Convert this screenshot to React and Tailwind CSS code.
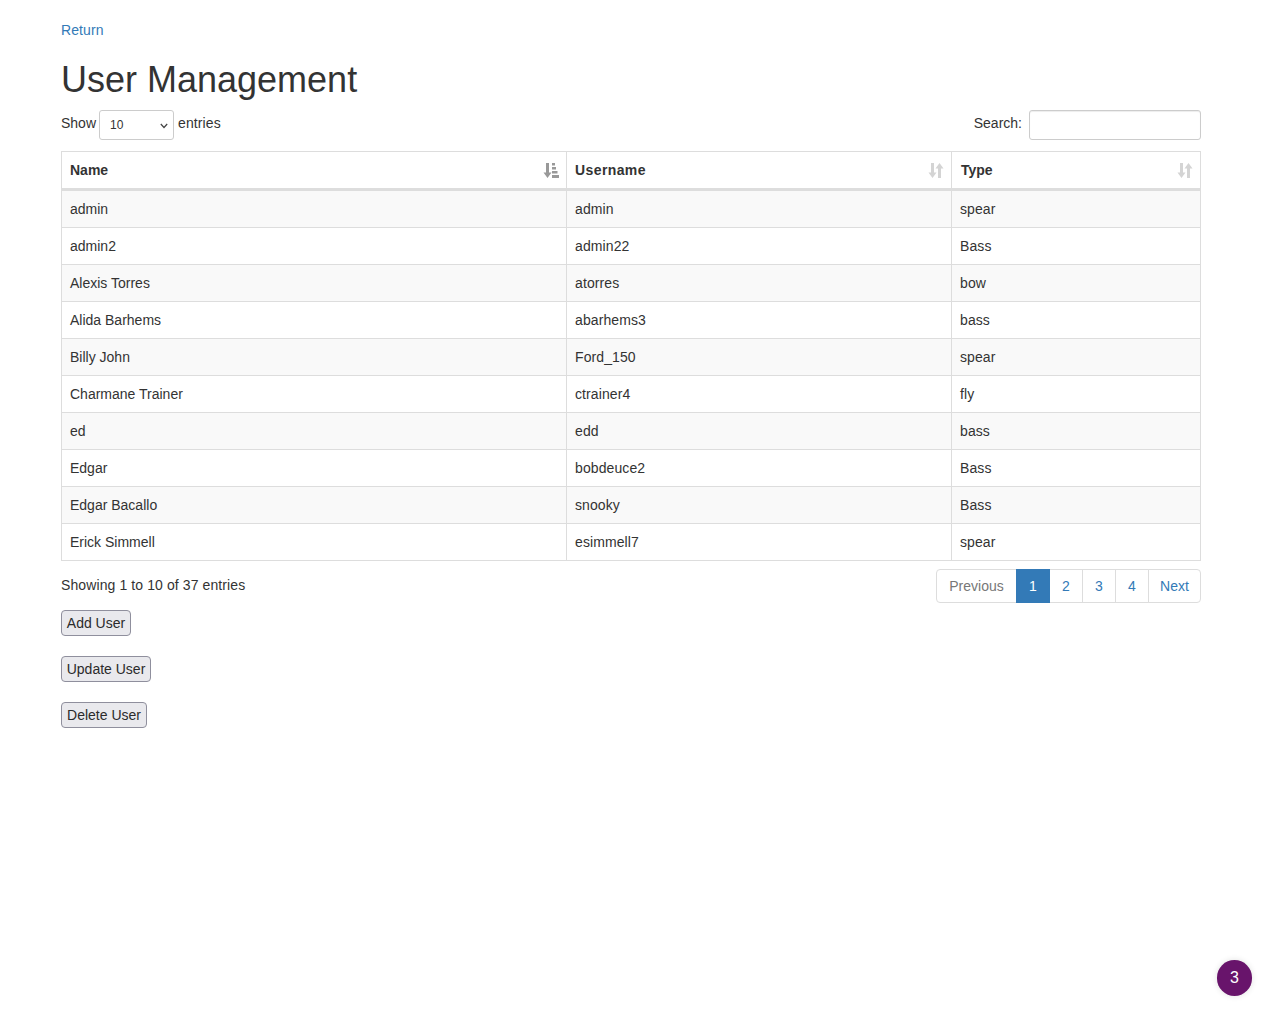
const rows = [
  ["admin", "admin", "spear"],
  ["admin2", "admin22", "Bass"],
  ["Alexis Torres", "atorres", "bow"],
  ["Alida Barhems", "abarhems3", "bass"],
  ["Billy John", "Ford_150", "spear"],
  ["Charmane Trainer", "ctrainer4", "fly"],
  ["ed", "edd", "bass"],
  ["Edgar", "bobdeuce2", "Bass"],
  ["Edgar Bacallo", "snooky", "Bass"],
  ["Erick Simmell", "esimmell7", "spear"],
];

function SortBoth() {
  return (
    <svg width="16" height="15" viewBox="0 0 16 15" className="block" fill="#d4d4d4">
      <path d="M3 0h3v9.5h2.5L4.5 15 .5 9.5H3z" />
      <path d="M10 15h3V5.5h2.5L11.500 0l-4 5.500H10z" />
    </svg>
  );
}

function SortAsc() {
  return (
    <svg width="16" height="15" viewBox="0 0 16 15" className="block" fill="#999">
      <path d="M3 0h3v9.5h2.500L4.500 15 .5 9.500H3z" />
      <path d="M9 0h3v2.500H9zM9 4h4v2.500H9zM9 8h5.500v2.500H9zM9 12h7v3H9z" />
    </svg>
  );
}

function Th({ label, width, icon, extra = "pl-2" }) {
  return (
    <th
      className={`relative border border-b-[3px] border-[#dddddd] p-0 pr-2 h-[38px] text-left font-bold align-middle ${extra}`}
      style={{ width }}
    >
      {label}
      <span className="absolute right-[7px] top-[11px]">{icon}</span>
    </th>
  );
}

function PageLink({ children, className = "" }) {
  return (
    <a href="#" className={`block border border-[#dddddd] -ml-px py-1.5 text-center leading-[20px] text-[#337ab7] bg-white ${className}`}>
      {children}
    </a>
  );
}

const btn = "block h-[26px] px-0 text-center whitespace-nowrap rounded-[4px] border border-[#8f8f9d] bg-[#e9e9ed] text-[#2b2b2b] text-[14px] leading-[20px] font-['Liberation_Sans',Arial,sans-serif]";

export default function App() {
  return (
    <div className="relative min-h-[1028px] bg-white text-[14px] leading-[20px] text-[#333333] font-['Liberation_Sans',Arial,sans-serif]">
      <div className="w-[1140px] ml-[61px] pt-5">
        <a href="#" className="block text-[#337ab7] tracking-[0.1px]">Return</a>
        <h1 className="text-[36px] leading-[40px] font-normal mt-5 mb-[10px]">User Management</h1>
        <div className="flex justify-between items-start h-[41px]">
          <div className="flex items-center h-[30px]">
            <span className="-translate-y-[2px]">Show</span>
            <div className="relative ml-[3px] mr-1">
              <div className="w-[75px] h-[30px] border border-[#cccccc] rounded-[3px] bg-white pl-[10px] text-[12px] leading-[28px]">10</div>
              <svg width="8" height="6" viewBox="0 0 8 6" className="absolute right-[6px] top-[13px]" fill="none" stroke="#444" strokeWidth="1.200">
                <path d="M.8 1 4 4.500 7.200 1" />
              </svg>
            </div>
            <span className="-translate-y-[2px] tracking-[0.1px]">entries</span>
          </div>
          <div className="flex items-center h-[30px]">
            <span className="-translate-y-[2px]">Search:</span>
            <input className="ml-[7px] w-[172px] h-[30px] border border-[#cccccc] rounded-[3px] bg-white outline-none shadow-[inset_0_1px_1px_rgba(0,0,0,0.075)]" />
          </div>
        </div>
        <table className="w-[1139px] table-fixed border-collapse">
          <thead>
            <tr>
              <Th label="Name" width="505px" icon={<SortAsc />} />
              <Th label="Username" width="385px" icon={<SortBoth />} extra="pl-2 tracking-[0.4px]" />
              <Th label="Type" width="249px" icon={<SortBoth />} extra="pl-[9px]" />
            </tr>
          </thead>
          <tbody>
            {rows.map((r, i) => (
              <tr key={r[0]} className={i % 2 === 0 ? "bg-[#f9f9f9]" : "bg-white"}>
                {r.map((c, j) => (
                  <td
                    key={j}
                    className={`border border-[#dddddd] px-2 align-middle ${i === 0 ? "h-[38px]" : "h-[37px]"} ${j > 0 ? "tracking-[0.1px]" : ""}`}
                  >
                    {c}
                  </td>
                ))}
              </tr>
            ))}
          </tbody>
        </table>
        <div className="flex justify-between items-start mt-2">
          <div className="pt-[6px] tracking-[0.1px]">Showing 1 to 10 of 37 entries</div>
          <nav className="flex">
            <PageLink className="w-[81px] rounded-l-[4px] !text-[#777777] !ml-0">Previous</PageLink>
            <PageLink className="relative z-10 w-[34px] !bg-[#337ab7] !border-[#337ab7] !text-white">1</PageLink>
            <PageLink className="w-[34px]">2</PageLink>
            <PageLink className="w-[34px]">3</PageLink>
            <PageLink className="w-[34px]">4</PageLink>
            <PageLink className="w-[53px] rounded-r-[4px]">Next</PageLink>
          </nav>
        </div>
        <div className="flex flex-col items-start gap-5 mt-[7px]">
          <button className={`${btn} w-[70px]`}>Add User</button>
          <button className={`${btn} w-[90px]`}>Update User</button>
          <button className={`${btn} w-[86px]`}>Delete User</button>
        </div>
      </div>
      <div className="absolute left-[1217px] top-[960px] w-[35px] h-[36px] rounded-full bg-[#68146b] text-white text-[16px] flex items-center justify-center shadow-[0_0_6px_rgba(0,0,0,0.12)]">3</div>
    </div>
  );
}
